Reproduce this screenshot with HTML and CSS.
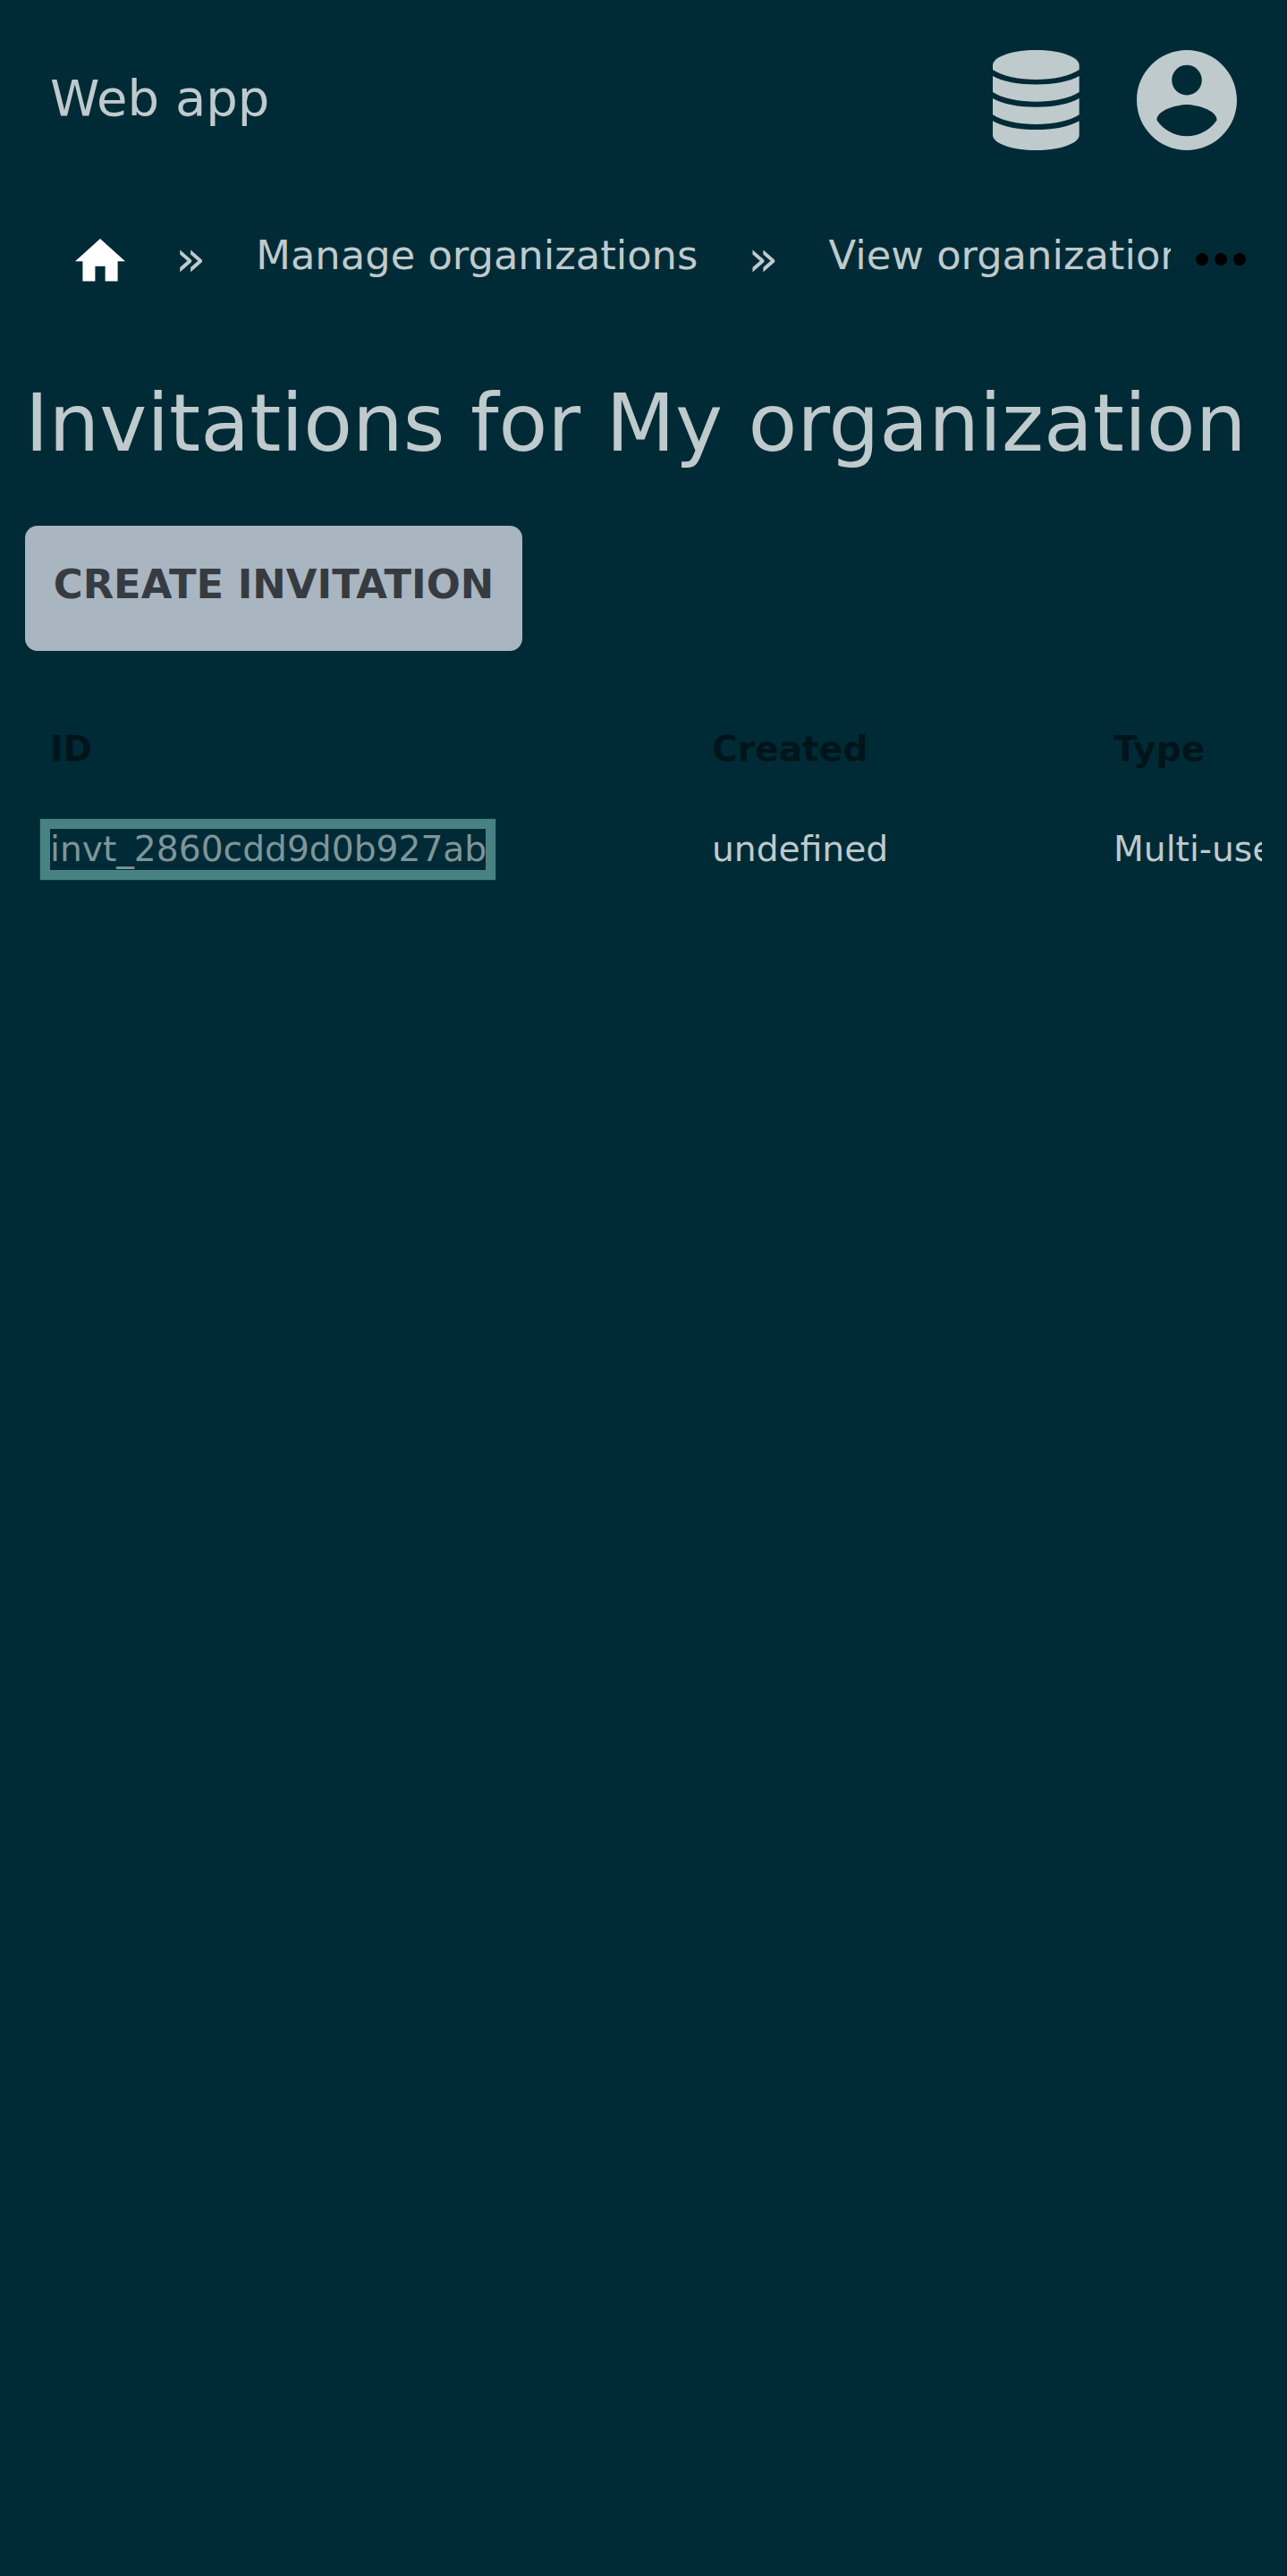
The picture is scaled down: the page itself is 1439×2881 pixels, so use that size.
FILE: index.html
```html
<!DOCTYPE html>
<html lang="en">
<head>
<meta charset="utf-8">
<title>Invitations</title>
<link rel="stylesheet" href="styles.css">
</head>
<body>
<header class="topbar">
  <span class="brand">Web app</span>
  <div class="actions">
    <svg class="icon-db" viewBox="0 0 96.7 112">
      <path d="M0 17C0 7.500 21.600 0 48.350 0S96.700 7.500 96.700 17V22C74.700 36.700 22 36.700 0 22Z"/>
      <path d="M0 29C22 41.700 74.700 41.700 96.700 29V47C74.700 61.300 22 61.300 0 47Z"/>
      <path d="M0 54C22 67 74.700 67 96.700 54V72.300C74.700 86.600 22 86.600 0 72.300Z"/>
      <path d="M0 79.200C22 92.400 74.700 92.400 96.700 79.200V95C96.700 104.500 75.100 112 48.350 112S0 104.500 0 95Z"/>
    </svg>
    <svg class="icon-user" viewBox="2 2 20 20"><path d="M12 2C6.480 2 2 6.480 2 12s4.480 10 10 10 10-4.480 10-10S17.520 2 12 2zm0 3c1.660 0 3 1.340 3 3s-1.340 3-3 3-3-1.340-3-3 1.340-3 3-3zm0 14.200c-2.500 0-4.710-1.280-6-3.220.030-1.990 4-3.080 6-3.080 1.990 0 5.970 1.090 6 3.080-1.290 1.940-3.500 3.220-6 3.220z"/></svg>
  </div>
</header>
<nav class="breadcrumbs">
  <div class="trail">
    <svg class="icon-home" viewBox="2 3 20 17"><path d="M10 20v-6h4v6h5v-8h3L12 3 2 12h3v8z"/></svg>
    <span class="sep">»</span>
    <a class="crumb">Manage organizations</a>
    <span class="sep">»</span>
    <a class="crumb">View organization</a>
  </div>
  <svg class="icon-more" viewBox="0 0 56 14"><circle cx="7" cy="7" r="7"/><circle cx="28" cy="7" r="7"/><circle cx="49" cy="7" r="7"/></svg>
</nav>
<main class="content">
  <h1 class="title">Invitations for My organization</h1>
  <button class="create">CREATE INVITATION</button>
  <div class="table">
    <div class="row head"><span>ID</span><span>Created</span><span>Type</span></div>
    <div class="row"><span><a class="link">invt_2860cdd9d0b927ab</a></span><span>undefined</span><span>Multi-use</span></div>
  </div>
</main>
</body>
</html>
```
FILE: styles.css
```css
* { box-sizing: border-box; }
body {
  margin: 0;
  min-height: 2881px;
  background: #002b36;
  color: #bfcacd;
  font-family: "DejaVu Sans", sans-serif;
  overflow-x: hidden;
}
svg { display: block; flex: none; fill: #bfcacd; }
.topbar {
  display: flex;
  justify-content: space-between;
  align-items: center;
  height: 224px;
  padding: 0 56.5px 0 56px;
}
.brand { font-size: 56px; line-height: 66px; padding-bottom: 4px; }
.actions { display: flex; gap: 64px; }
.icon-db { width: 96.7px; height: 112px; }
.icon-user { width: 112px; height: 112px; }
.breadcrumbs {
  display: flex;
  align-items: flex-start;
  height: 134px;
  padding: 33px 46px 0 84px;
}
.trail {
  display: flex;
  flex: none;
  width: 1225px;
  overflow: hidden;
  white-space: nowrap;
}
.icon-home { width: 56px; height: 47.6px; margin-top: 10px; fill: #fff; }
.sep { font-size: 56px; line-height: 64px; margin: 0 56px; }
.crumb { font-size: 44.8px; line-height: 58px; }
.icon-more { width: 56px; height: 14px; margin: 26px 0 0 28px; fill: #000; }
.content { padding: 62px 28px 0; }
.title {
  margin: 0 0 62px;
  font-size: 89.6px;
  font-weight: 400;
  line-height: 106px;
  white-space: nowrap;
}
.create {
  display: block;
  width: 556px;
  height: 140px;
  padding: 0 0 8px;
  border: 0;
  border-radius: 14px;
  background: #a9b5c0;
  color: #363b42;
  font: bold 44.8px/54px "DejaVu Sans", sans-serif;
  white-space: nowrap;
}
.table { margin-top: 54px; overflow: hidden; }
.row {
  display: grid;
  grid-template-columns: 740px 449px 250px;
  align-items: center;
  height: 112px;
  padding-left: 28px;
  font-size: 39.2px;
  line-height: 46px;
  white-space: nowrap;
}
.head { color: #00151b; font-weight: 700; }
.link {
  display: inline-block;
  width: 487px;
  color: #7f959a;
  box-shadow: 0 0 0 11.2px #498282;
}
```
